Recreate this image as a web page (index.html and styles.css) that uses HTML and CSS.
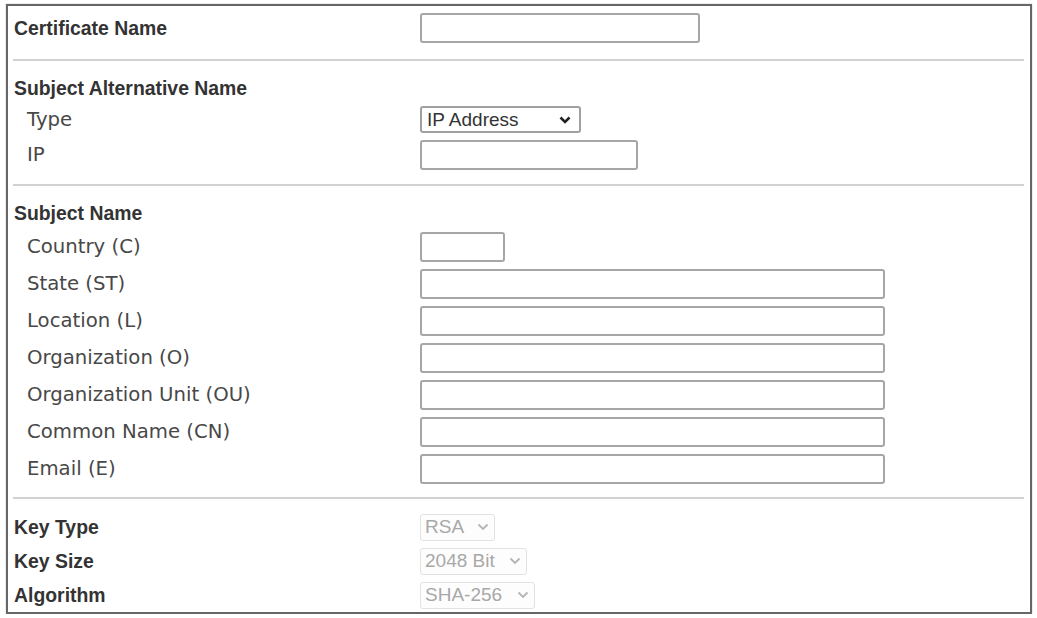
FILE: index.html
```html
<!DOCTYPE html>
<html lang="en">

<head>
  <meta charset="UTF-8">
  <meta name="viewport" content="width=device-width, initial-scale=1.0">
  <title>Certificate Request</title>
  <link rel="stylesheet" href="styles.css">
</head>

<body>
  <div class="panel">
    <section class="group cert">
      <div class="row">
        <label class="title" for="certName">Certificate Name</label>
        <input type="text" id="certName" class="field w-cert">
      </div>
    </section>

    <hr class="rule">

    <section class="group san">
      <div class="heading">Subject Alternative Name</div>
      <div class="row row-select">
        <label class="label">Type</label>
        <div class="select w-type">
          <span>IP Address</span>
          <svg class="chevron" width="12" height="8" viewBox="0 0 12 8"><path d="M1.5 1.5 L6 6 L10.5 1.5" fill="none" stroke="#222" stroke-width="2.6"/></svg>
        </div>
      </div>
      <div class="row">
        <label class="label" for="ip">IP</label>
        <input type="text" id="ip" class="field w-ip">
      </div>
    </section>

    <hr class="rule">

    <section class="group subject">
      <div class="heading">Subject Name</div>
      <div class="row">
        <label class="label" for="country">Country (C)</label>
        <input type="text" id="country" class="field w-country">
      </div>
      <div class="row">
        <label class="label" for="state">State (ST)</label>
        <input type="text" id="state" class="field w-long">
      </div>
      <div class="row">
        <label class="label" for="location">Location (L)</label>
        <input type="text" id="location" class="field w-long">
      </div>
      <div class="row">
        <label class="label" for="org">Organization (O)</label>
        <input type="text" id="org" class="field w-long">
      </div>
      <div class="row">
        <label class="label" for="orgUnit">Organization Unit (OU)</label>
        <input type="text" id="orgUnit" class="field w-long">
      </div>
      <div class="row">
        <label class="label" for="commonName">Common Name (CN)</label>
        <input type="text" id="commonName" class="field w-long">
      </div>
      <div class="row">
        <label class="label" for="email">Email (E)</label>
        <input type="text" id="email" class="field w-long">
      </div>
    </section>

    <hr class="rule">

    <section class="group key">
      <div class="row row-key">
        <span class="title">Key Type</span>
        <div class="select disabled w-rsa">
          <span>RSA</span>
          <svg class="chevron" width="12" height="8" viewBox="0 0 12 8"><path d="M1.5 1.5 L6 6 L10.5 1.5" fill="none" stroke="#b4b4b4" stroke-width="1.8"/></svg>
        </div>
      </div>
      <div class="row row-key">
        <span class="title">Key Size</span>
        <div class="select disabled w-bits">
          <span>2048 Bit</span>
          <svg class="chevron" width="12" height="8" viewBox="0 0 12 8"><path d="M1.5 1.5 L6 6 L10.5 1.5" fill="none" stroke="#b4b4b4" stroke-width="1.8"/></svg>
        </div>
      </div>
      <div class="row row-key">
        <span class="title">Algorithm</span>
        <div class="select disabled w-sha">
          <span>SHA-256</span>
          <svg class="chevron" width="12" height="8" viewBox="0 0 12 8"><path d="M1.5 1.5 L6 6 L10.5 1.5" fill="none" stroke="#b4b4b4" stroke-width="1.8"/></svg>
        </div>
      </div>
    </section>
  </div>
</body>

</html>
```

FILE: styles.css
```css
body {
  margin: 0;
  padding: 0;
  background-color: #fff;
  font-family: "DejaVu Sans", Verdana, sans-serif;
  color: #444;
}

.panel {
  margin: 4px 5px 0 6px;
  border: 2px solid #666;
  box-shadow: 0 0 1px #999;
}

.group {
  display: flex;
  flex-direction: column;
}

.cert {
  padding: 7px 0 16px;
}

.san {
  padding: 14px 0 11px;
}

.subject {
  padding: 14px 0 10px;
}

.key {
  padding: 11px 0 0;
}

.rule {
  margin: 0 6px 0 5px;
  height: 2px;
  border: none;
  background-color: #d2d2d2;
}

.heading {
  height: 26px;
  line-height: 26px;
  margin-bottom: 2px;
  padding-left: 6px;
  font-family: "Liberation Sans", Arial, sans-serif;
  font-weight: bold;
  font-size: 19.4px;
  color: #333;
}

.row {
  display: flex;
  align-items: center;
  height: 37px;
  padding-left: 6px;
}

.cert .row {
  height: 30px;
}

.row-select {
  height: 33px;
}

.row-key {
  height: 34px;
}

.title {
  width: 406px;
  flex-shrink: 0;
  font-family: "Liberation Sans", Arial, sans-serif;
  font-weight: bold;
  font-size: 19.4px;
  color: #333;
}

.label {
  width: 393px;
  flex-shrink: 0;
  padding-left: 13px;
  font-size: 19.7px;
  color: #484848;
}

.field {
  box-sizing: border-box;
  height: 30px;
  margin: 0;
  border: 2px solid #a6a6a6;
  border-radius: 3px;
  background-color: #fff;
}

.w-cert {
  width: 280px;
}

.w-ip {
  width: 218px;
}

.w-country {
  width: 85px;
}

.w-long {
  width: 465px;
}

.select {
  box-sizing: border-box;
  display: flex;
  align-items: center;
  justify-content: space-between;
  height: 27px;
  padding: 0 8px 0 5px;
  border: 2px solid #a0a0a0;
  border-radius: 3px;
  font-family: "Liberation Sans", Arial, sans-serif;
  font-size: 19px;
  color: #333;
}

.select.disabled {
  padding: 0 5px 0 4px;
  border: 1px solid #e2e2e2;
  color: #a8a8a8;
  background-color: #fdfdfd;
}

.w-type {
  width: 161px;
}

.w-rsa {
  width: 75px;
}

.w-bits {
  width: 107px;
}

.w-sha {
  width: 115px;
}
```
